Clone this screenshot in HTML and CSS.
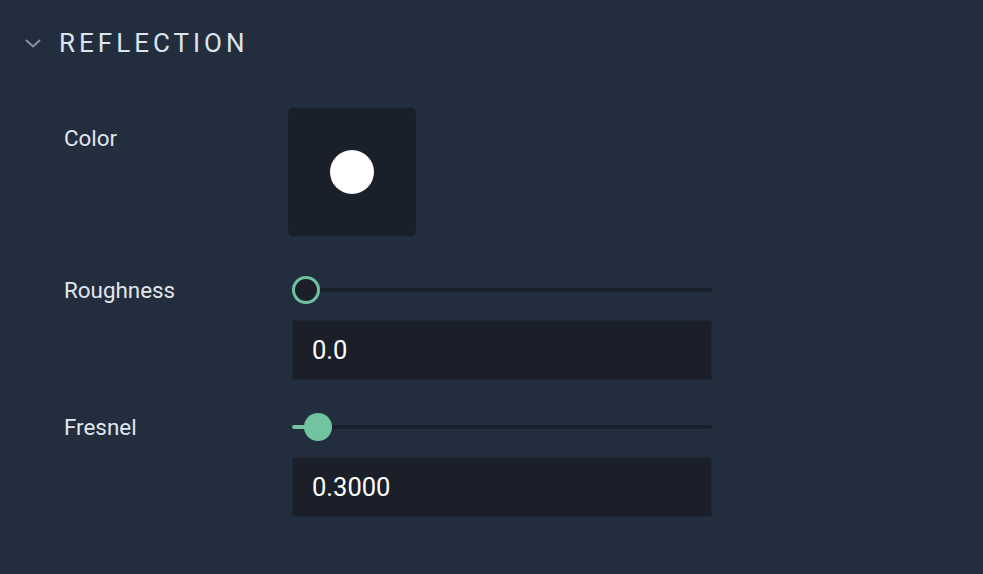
FILE: index.html
```html
<!DOCTYPE html>
<html>
<head>
<meta charset="utf-8">
<link rel="stylesheet" href="styles.css">
</head>
<body>
<div class="panel">
  <div class="header">
    <svg class="chevron" width="18" height="12" viewBox="0 0 18 12"><path d="M2 3 L9 9.5 L16 3" fill="none" stroke="#8b94a1" stroke-width="2"/></svg>
    <span class="title">REFLECTION</span>
  </div>
  <div class="rows">
    <div class="row row-color">
      <div class="label">Color</div>
      <div class="swatch"><span class="dot"></span></div>
    </div>
    <div class="row row-slider">
      <div class="label">Roughness</div>
      <div class="slider" style="--v:0">
        <div class="track"></div>
        <div class="fill"></div>
        <div class="thumb thumb-empty"></div>
      </div>
      <div class="input">0.0</div>
    </div>
    <div class="row row-slider">
      <div class="label">Fresnel</div>
      <div class="slider" style="--v:0.03">
        <div class="track"></div>
        <div class="fill"></div>
        <div class="thumb thumb-full"></div>
      </div>
      <div class="input">0.3000</div>
    </div>
  </div>
</div>
</body>
</html>
```
FILE: styles.css
```css
html, body {
  margin: 0;
  padding: 0;
  background: #222d3e;
  width: 983px;
  height: 574px;
  overflow: hidden;
  font-family: Roboto, "Liberation Sans", sans-serif;
}
.panel {
  display: flex;
  flex-direction: column;
}
.header {
  display: flex;
  align-items: center;
  height: 40px;
  margin-top: 23px;
  padding-left: 24px;
}
.chevron {
  display: block;
  margin-right: 17px;
}
.title {
  font-size: 26px;
  letter-spacing: 4px;
  color: #dde4ec;
  line-height: 40px;
}
.rows {
  display: flex;
  flex-direction: column;
  padding-left: 64px;
  margin-top: 45px;
}
.row {
  display: grid;
  grid-template-columns: 228px 420px;
}
.label {
  font-size: 22.4px;
  color: #e1e6ec;
  line-height: 24px;
}
.row-color .label {
  padding-top: 18px;
}
.swatch {
  width: 128px;
  height: 128px;
  margin-left: -4px;
  background: #1a202a;
  border-radius: 5px;
  display: flex;
  align-items: center;
  justify-content: center;
}
.dot {
  width: 44px;
  height: 44px;
  border-radius: 50%;
  background: #ffffff;
}
.row-slider {
  grid-template-rows: 28px auto;
  row-gap: 16px;
  margin-top: 40px;
}
.row-slider + .row-slider {
  margin-top: 33px;
}
.row-slider .label {
  align-self: center;
  grid-row: 1;
  grid-column: 1;
}
.slider {
  grid-row: 1;
  grid-column: 2;
  position: relative;
  height: 28px;
}
.track {
  position: absolute;
  left: 0;
  right: 0;
  top: 12px;
  height: 4px;
  border-radius: 2px;
  background: #19202a;
}
.fill {
  position: absolute;
  left: 0;
  top: 12px;
  height: 4px;
  border-radius: 2px;
  background: #72c4a1;
  width: calc(var(--v) * (100% - 28px) + 14px);
}
.thumb {
  position: absolute;
  top: 0;
  left: calc(var(--v) * (100% - 28px));
  width: 28px;
  height: 28px;
  border-radius: 50%;
  box-sizing: border-box;
}
.thumb-empty {
  background: #1a1f29;
  border: 3px solid #6fc19f;
}
.thumb-full {
  background: #72c4a1;
}
.input {
  grid-row: 2;
  grid-column: 2;
  height: 60px;
  box-sizing: border-box;
  background: #1a1f29;
  border: 1px solid #1f2735;
  padding-left: 19px;
  display: flex;
  align-items: center;
  font-size: 25.5px;
  color: #ffffff;
}
```
